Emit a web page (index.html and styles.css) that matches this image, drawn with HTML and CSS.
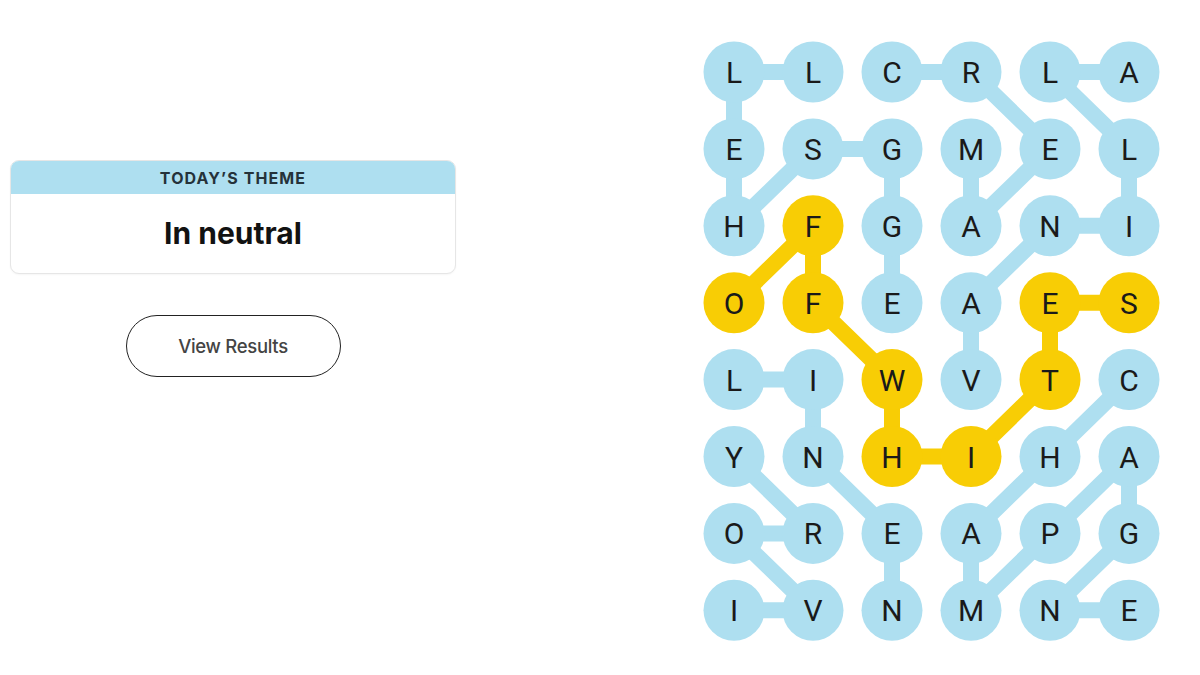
FILE: index.html
```html
<!DOCTYPE html>
<html lang="en">
<head>
<meta charset="utf-8">
<title>Strands</title>
<link rel="stylesheet" href="styles.css">
</head>
<body>
<div class="page">
  <section class="side">
    <div class="theme-card">
      <div class="theme-head">TODAY’S THEME</div>
      <div class="theme-body">In neutral</div>
    </div>
    <button class="results-btn" type="button">View Results</button>
  </section>
  <section class="board">
    <svg class="board-svg" width="470" height="612" viewBox="0 0 470 612" xmlns="http://www.w3.org/2000/svg">
      <g class="links-blue">
        <!-- EGGSHELL -->
        <line x1="192" y1="262.7" x2="192" y2="185.8"/>
        <line x1="192" y1="185.8" x2="192" y2="108.9"/>
        <line x1="192" y1="108.9" x2="113" y2="108.9"/>
        <line x1="113" y1="108.9" x2="34" y2="185.8"/>
        <line x1="34" y1="185.8" x2="34" y2="108.9"/>
        <line x1="34" y1="108.9" x2="34" y2="32"/>
        <line x1="34" y1="32" x2="113" y2="32"/>
        <!-- CREAM -->
        <line x1="192" y1="32" x2="271" y2="32"/>
        <line x1="271" y1="32" x2="350" y2="108.9"/>
        <line x1="350" y1="108.9" x2="271" y2="185.8"/>
        <line x1="271" y1="185.8" x2="271" y2="108.9"/>
        <!-- VANILLA -->
        <line x1="271" y1="339.6" x2="271" y2="262.7"/>
        <line x1="271" y1="262.7" x2="350" y2="185.8"/>
        <line x1="350" y1="185.8" x2="429" y2="185.8"/>
        <line x1="429" y1="185.8" x2="429" y2="108.9"/>
        <line x1="429" y1="108.9" x2="350" y2="32"/>
        <line x1="350" y1="32" x2="429" y2="32"/>
        <!-- LINEN -->
        <line x1="34" y1="339.6" x2="113" y2="339.6"/>
        <line x1="113" y1="339.6" x2="113" y2="416.5"/>
        <line x1="113" y1="416.5" x2="192" y2="493.4"/>
        <line x1="192" y1="493.4" x2="192" y2="570.3"/>
        <!-- IVORY -->
        <line x1="34" y1="570.3" x2="113" y2="570.3"/>
        <line x1="113" y1="570.3" x2="34" y2="493.4"/>
        <line x1="34" y1="493.4" x2="113" y2="493.4"/>
        <line x1="113" y1="493.4" x2="34" y2="416.5"/>
        <!-- CHAMPAGNE -->
        <line x1="429" y1="339.6" x2="350" y2="416.5"/>
        <line x1="350" y1="416.5" x2="271" y2="493.4"/>
        <line x1="271" y1="493.4" x2="271" y2="570.3"/>
        <line x1="271" y1="570.3" x2="350" y2="493.4"/>
        <line x1="350" y1="493.4" x2="429" y2="416.5"/>
        <line x1="429" y1="416.5" x2="429" y2="493.4"/>
        <line x1="429" y1="493.4" x2="350" y2="570.3"/>
        <line x1="350" y1="570.3" x2="429" y2="570.3"/>
      </g>
      <g class="links-gold">
        <line x1="34" y1="262.7" x2="113" y2="185.8"/>
        <line x1="113" y1="185.8" x2="113" y2="262.7"/>
        <line x1="113" y1="262.7" x2="192" y2="339.6"/>
        <line x1="192" y1="339.6" x2="192" y2="416.5"/>
        <line x1="192" y1="416.5" x2="271" y2="416.5"/>
        <line x1="271" y1="416.5" x2="350" y2="339.6"/>
        <line x1="350" y1="339.6" x2="350" y2="262.7"/>
        <line x1="350" y1="262.7" x2="429" y2="262.7"/>
      </g>
      <g class="nodes">
        <!-- row 1 -->
        <circle cx="34" cy="32" r="30.5"/><circle cx="113" cy="32" r="30.5"/><circle cx="192" cy="32" r="30.5"/><circle cx="271" cy="32" r="30.5"/><circle cx="350" cy="32" r="30.5"/><circle cx="429" cy="32" r="30.5"/>
        <!-- row 2 -->
        <circle cx="34" cy="108.9" r="30.5"/><circle cx="113" cy="108.9" r="30.5"/><circle cx="192" cy="108.9" r="30.5"/><circle cx="271" cy="108.9" r="30.5"/><circle cx="350" cy="108.9" r="30.5"/><circle cx="429" cy="108.9" r="30.5"/>
        <!-- row 3 -->
        <circle cx="34" cy="185.8" r="30.5"/><circle class="gold" cx="113" cy="185.8" r="30.5"/><circle cx="192" cy="185.8" r="30.5"/><circle cx="271" cy="185.8" r="30.5"/><circle cx="350" cy="185.8" r="30.5"/><circle cx="429" cy="185.8" r="30.5"/>
        <!-- row 4 -->
        <circle class="gold" cx="34" cy="262.7" r="30.5"/><circle class="gold" cx="113" cy="262.7" r="30.5"/><circle cx="192" cy="262.7" r="30.5"/><circle cx="271" cy="262.7" r="30.5"/><circle class="gold" cx="350" cy="262.7" r="30.5"/><circle class="gold" cx="429" cy="262.7" r="30.5"/>
        <!-- row 5 -->
        <circle cx="34" cy="339.6" r="30.5"/><circle cx="113" cy="339.6" r="30.5"/><circle class="gold" cx="192" cy="339.6" r="30.5"/><circle cx="271" cy="339.6" r="30.5"/><circle class="gold" cx="350" cy="339.6" r="30.5"/><circle cx="429" cy="339.6" r="30.5"/>
        <!-- row 6 -->
        <circle cx="34" cy="416.5" r="30.5"/><circle cx="113" cy="416.5" r="30.5"/><circle class="gold" cx="192" cy="416.5" r="30.5"/><circle class="gold" cx="271" cy="416.5" r="30.5"/><circle cx="350" cy="416.5" r="30.5"/><circle cx="429" cy="416.5" r="30.5"/>
        <!-- row 7 -->
        <circle cx="34" cy="493.4" r="30.5"/><circle cx="113" cy="493.4" r="30.5"/><circle cx="192" cy="493.4" r="30.5"/><circle cx="271" cy="493.4" r="30.5"/><circle cx="350" cy="493.4" r="30.5"/><circle cx="429" cy="493.4" r="30.5"/>
        <!-- row 8 -->
        <circle cx="34" cy="570.3" r="30.5"/><circle cx="113" cy="570.3" r="30.5"/><circle cx="192" cy="570.3" r="30.5"/><circle cx="271" cy="570.3" r="30.5"/><circle cx="350" cy="570.3" r="30.5"/><circle cx="429" cy="570.3" r="30.5"/>
      </g>
      <g class="letters">
        <text x="34" y="43">L</text><text x="113" y="43">L</text><text x="192" y="43">C</text><text x="271" y="43">R</text><text x="350" y="43">L</text><text x="429" y="43">A</text>
        <text x="34" y="119.9">E</text><text x="113" y="119.9">S</text><text x="192" y="119.9">G</text><text x="271" y="119.9">M</text><text x="350" y="119.9">E</text><text x="429" y="119.9">L</text>
        <text x="34" y="196.8">H</text><text x="113" y="196.8">F</text><text x="192" y="196.8">G</text><text x="271" y="196.8">A</text><text x="350" y="196.8">N</text><text x="429" y="196.8">I</text>
        <text x="34" y="273.7">O</text><text x="113" y="273.7">F</text><text x="192" y="273.7">E</text><text x="271" y="273.7">A</text><text x="350" y="273.7">E</text><text x="429" y="273.7">S</text>
        <text x="34" y="350.6">L</text><text x="113" y="350.6">I</text><text x="192" y="350.6">W</text><text x="271" y="350.6">V</text><text x="350" y="350.6">T</text><text x="429" y="350.6">C</text>
        <text x="34" y="427.5">Y</text><text x="113" y="427.5">N</text><text x="192" y="427.5">H</text><text x="271" y="427.5">I</text><text x="350" y="427.5">H</text><text x="429" y="427.5">A</text>
        <text x="34" y="504.4">O</text><text x="113" y="504.4">R</text><text x="192" y="504.4">E</text><text x="271" y="504.4">A</text><text x="350" y="504.4">P</text><text x="429" y="504.4">G</text>
        <text x="34" y="581.3">I</text><text x="113" y="581.3">V</text><text x="192" y="581.3">N</text><text x="271" y="581.3">M</text><text x="350" y="581.3">N</text><text x="429" y="581.3">E</text>
      </g>
    </svg>
  </section>
</div>
</body>
</html>
```

FILE: styles.css
```css
html, body {
  margin: 0;
  padding: 0;
  background: #ffffff;
}

body {
  width: 1200px;
  height: 675px;
  overflow: hidden;
  font-family: Inter, Roboto, "Liberation Sans", Arial, sans-serif;
  color: #121212;
}

.page {
  display: flex;
  align-items: flex-start;
  padding: 40px 0 0 10px;
}

.side {
  width: 446px;
  margin-top: 120px;
  display: flex;
  flex-direction: column;
  align-items: center;
}

.theme-card {
  width: 100%;
  box-sizing: border-box;
  border: 1px solid #e6e6e6;
  border-radius: 9px;
  overflow: hidden;
  background: #fff;
  box-shadow: 0 1px 2px rgba(0,0,0,0.04);
}

.theme-head {
  background: #aedff0;
  height: 33px;
  line-height: 35px;
  text-align: center;
  font-size: 16px;
  font-weight: 700;
  letter-spacing: 1.1px;
  color: #25323a;
}

.theme-body {
  height: 79px;
  line-height: 78px;
  text-align: center;
  font-size: 30px;
  font-weight: 700;
  letter-spacing: 0;
  color: #121212;
}

.results-btn {
  margin-top: 41px;
  width: 215px;
  height: 62px;
  border: 1.5px solid #222;
  border-radius: 31px;
  background: #fff;
  font-family: Inter, Roboto, "Liberation Sans", Arial, sans-serif;
  font-size: 18.5px;
  font-weight: 500;
  letter-spacing: -0.3px;
  color: #444;
  padding: 0;
}

.board {
  margin-left: 244px;
}

.board-svg {
  display: block;
}

.links-blue line {
  stroke: #aedff0;
  stroke-width: 16;
  stroke-linecap: round;
}

.links-gold line {
  stroke: #f8cd05;
  stroke-width: 16;
  stroke-linecap: round;
}

.nodes circle {
  fill: #aedff0;
}

.nodes circle.gold {
  fill: #f8cd05;
}

.letters text {
  font-family: Roboto, "Liberation Sans", Arial, sans-serif;
  font-size: 30px;
  font-weight: 400;
  text-anchor: middle;
  fill: #1a1a1a;
}
```
